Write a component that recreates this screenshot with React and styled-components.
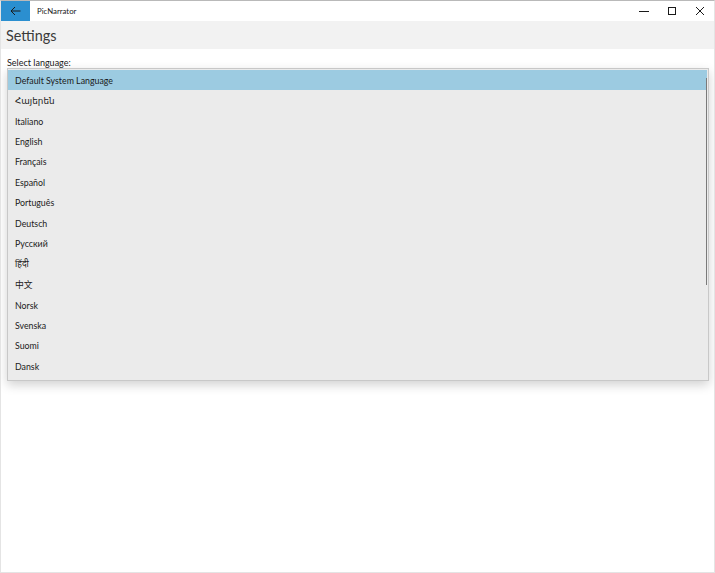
import React from "react";
import styled, { createGlobalStyle } from "styled-components";

const LANGUAGES = [
  "Default System Language",
  "Հայերեն",
  "Italiano",
  "English",
  "Français",
  "Español",
  "Português",
  "Deutsch",
  "Русский",
  "हिंदी",
  "中文",
  "Norsk",
  "Svenska",
  "Suomi",
  "Dansk",
];

const GlobalStyle = createGlobalStyle`
  html, body {
    margin: 0;
    padding: 0;
    background: #ffffff;
  }
  body {
    font-family: Lato, "Noto Sans", "DejaVu Sans", "Noto Sans CJK SC", sans-serif;
    color: #1a1a1a;
  }
`;

function App() {
  return (
    <>
      <GlobalStyle />
      <Window>
        <TitleBar>
          <BackButton aria-label="Back">
            <svg width="11" height="10" viewBox="0 0 11 10">
              <path d="M10.5 5H1M5 1L1 5l4 4" fill="none" stroke="#1a1a1a" strokeWidth="1" />
            </svg>
          </BackButton>
          <AppTitle>PicNarrator</AppTitle>
          <Controls>
            <ControlButton aria-label="Minimize">
              <svg width="10" height="10" viewBox="0 0 10 10">
                <path d="M0 5.5h10" stroke="#1a1a1a" strokeWidth="1" />
              </svg>
            </ControlButton>
            <ControlButton aria-label="Maximize">
              <svg width="10" height="10" viewBox="0 0 10 10">
                <rect x="1.5" y="1.5" width="7" height="7" fill="none" stroke="#1a1a1a" strokeWidth="1" />
              </svg>
            </ControlButton>
            <ControlButton aria-label="Close">
              <svg width="10" height="10" viewBox="0 0 10 10">
                <path d="M1 1l8 8M9 1L1 9" stroke="#1a1a1a" strokeWidth="1" />
              </svg>
            </ControlButton>
          </Controls>
        </TitleBar>
        <Header>
          <PageTitle>Settings</PageTitle>
        </Header>
        <Content>
          <Label>Select language:</Label>
          <PopupArea>
            <Popup>
              <List>
                {LANGUAGES.map((lang, i) => (
                  <Item key={lang} selected={i === 0}>
                    {lang}
                  </Item>
                ))}
              </List>
              <ScrollThumb />
            </Popup>
          </PopupArea>
        </Content>
      </Window>
    </>
  );
}

const Window = styled.div`
  box-sizing: border-box;
  width: 715px;
  height: 573px;
  border: 1px solid #e4e4e4;
  border-top-color: #b9b9b9;
  display: flex;
  flex-direction: column;
  background: #ffffff;
  overflow: hidden;
`;

const TitleBar = styled.div`
  height: 20px;
  display: flex;
  align-items: center;
  background: #ffffff;
`;

const BackButton = styled.div`
  width: 30px;
  height: 20px;
  margin-left: -1px;
  background: #2b8fd0;
  display: flex;
  align-items: center;
  justify-content: center;
`;

const AppTitle = styled.div`
  margin-left: 7px;
  font-size: 7.8px;
  color: #1a1a1a;
`;

const Controls = styled.div`
  margin-left: auto;
  display: flex;
`;

const ControlButton = styled.div`
  width: 28px;
  height: 20px;
  display: flex;
  align-items: center;
  justify-content: center;
`;

const Header = styled.div`
  height: 28px;
  background: #f2f2f2;
  display: flex;
  align-items: center;
  padding-left: 5px;
`;

const PageTitle = styled.h1`
  margin: 0;
  font-size: 14.4px;
  font-weight: 400;
  color: #3a3a3a;
`;

const Content = styled.div`
  padding: 8px 6px 0 6px;
  display: flex;
  flex-direction: column;
`;

const Label = styled.div`
  font-size: 9px;
  line-height: 12px;
  color: #1a1a1a;
`;

const PopupArea = styled.div`
  margin-top: -1px;
`;

const Popup = styled.div`
  position: relative;
  box-sizing: border-box;
  width: 702px;
  height: 313px;
  background: #ebebeb;
  border: 1px solid #c8c8c8;
  padding: 1px 0 0 0;
  box-shadow: 0 4px 10px rgba(0, 0, 0, 0.18);
`;

const List = styled.div`
  display: flex;
  flex-direction: column;
`;

const Item = styled.div`
  height: 20.45px;
  display: flex;
  align-items: center;
  padding-left: 7px;
  margin-right: 1px;
  font-size: 8.8px;
  color: #1a1a1a;
  background: ${(p) => (p.selected ? "#9ccbe1" : "transparent")};
`;

const ScrollThumb = styled.div`
  position: absolute;
  right: 1px;
  top: 9px;
  width: 1.5px;
  height: 207px;
  background: #7a7a7a;
`;

export default App;
